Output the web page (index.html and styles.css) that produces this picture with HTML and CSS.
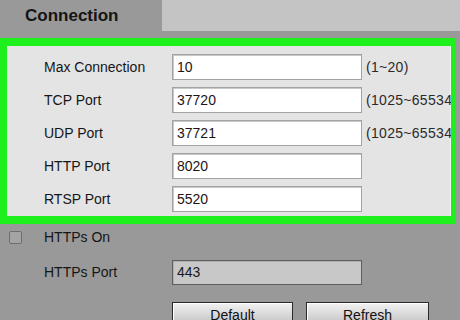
FILE: index.html
```html
<!DOCTYPE html>
<html lang="en">
<head>
    <meta charset="UTF-8">
    <title>Connection</title>
    <link rel="stylesheet" href="styles.css">
</head>
<body>
    <div class="tab-bar">
        <div class="tab active">Connection</div>
        <div class="tab-rest"></div>
    </div>

    <div class="highlight">
        <div class="panel">
            <div class="row">
                <label>Max Connection</label>
                <input type="text" value="10">
                <span class="range">(1~20)</span>
            </div>
            <div class="row">
                <label>TCP Port</label>
                <input type="text" value="37720">
                <span class="range">(1025~65534)</span>
            </div>
            <div class="row">
                <label>UDP Port</label>
                <input type="text" value="37721">
                <span class="range">(1025~65534)</span>
            </div>
            <div class="row">
                <label>HTTP Port</label>
                <input type="text" value="8020">
            </div>
            <div class="row">
                <label>RTSP Port</label>
                <input type="text" value="5520">
            </div>
        </div>
    </div>

    <div class="lower">
        <div class="lower-row check-row">
            <span class="checkbox"></span>
            <label>HTTPs On</label>
        </div>
        <div class="lower-row">
            <span></span>
            <label>HTTPs Port</label>
            <input type="text" class="disabled" value="443">
        </div>
        <div class="buttons">
            <button>Default</button>
            <button>Refresh</button>
        </div>
    </div>
</body>
</html>
```

FILE: styles.css
```css
* {
    margin: 0;
    padding: 0;
    box-sizing: border-box;
}

html, body {
    width: 100%;
    height: 100%;
    overflow: hidden;
}

body {
    background: #999;
    font-family: "Liberation Sans", Arial, sans-serif;
    font-size: 14px;
    color: #161616;
}

.tab-bar {
    display: flex;
    height: 31px;
    margin-bottom: 7px;
}

.tab {
    width: 162px;
    padding-left: 25px;
    font-size: 17px;
    font-weight: bold;
    line-height: 31px;
    color: #141414;
}

.tab-rest {
    flex: 1;
    background: #c4c4c4;
}

/* green highlight frame */
.highlight {
    width: 456px;
    border-style: solid;
    border-color: #1ef01e;
    border-width: 8px 5px 8px 7px;
}

.panel {
    background: #e4e4e4;
    padding: 8px 0 4px 37px;
    display: flex;
    flex-direction: column;
    gap: 7px;
    box-shadow: inset -1px 0 0 #f4f4f4;
}

.row {
    display: grid;
    grid-template-columns: 128px 190px auto;
    align-items: center;
    height: 26px;
    white-space: nowrap;
    overflow: hidden;
}

input {
    width: 190px;
    height: 26px;
    padding: 0 4px;
    font-family: "Liberation Sans", Arial, sans-serif;
    font-size: 14px;
    color: #1e1414;
    background: #fff;
    border: 1px solid #a2a2a2;
    box-shadow: inset 1px 1px 0 #c8c8c8;
    outline: none;
}

.range {
    margin-left: 4px;
    color: #2a2a2a;
    letter-spacing: 0.3px;
}

.lower {
    padding-left: 9px;
}

.lower-row {
    display: grid;
    grid-template-columns: 35px 128px 190px;
    align-items: center;
    height: 26px;
}

.check-row {
    margin-bottom: 9px;
}

.checkbox {
    width: 13px;
    height: 13px;
    border: 1px solid #6e6e6e;
    border-radius: 2px;
    background: #a4a4a4;
}

input.disabled {
    height: 25px;
    background: #c8c8c8;
    border: 1px solid #5e5e5e;
    box-shadow: inset 1px 1px 0 #b0b0b0;
    color: #1a1a1a;
}

.buttons {
    display: flex;
    gap: 13px;
    margin: 17px 0 0 163px;
}

button {
    width: 121px;
    height: 26px;
    font-family: "Liberation Sans", Arial, sans-serif;
    font-size: 14px;
    color: #111;
    background: linear-gradient(#f2f2f2, #bdbdbd);
    border: 1px solid #2a2a2a;
    box-shadow: inset 1px 1px 0 #fff;
}

button + button {
    width: 123px;
}
```
